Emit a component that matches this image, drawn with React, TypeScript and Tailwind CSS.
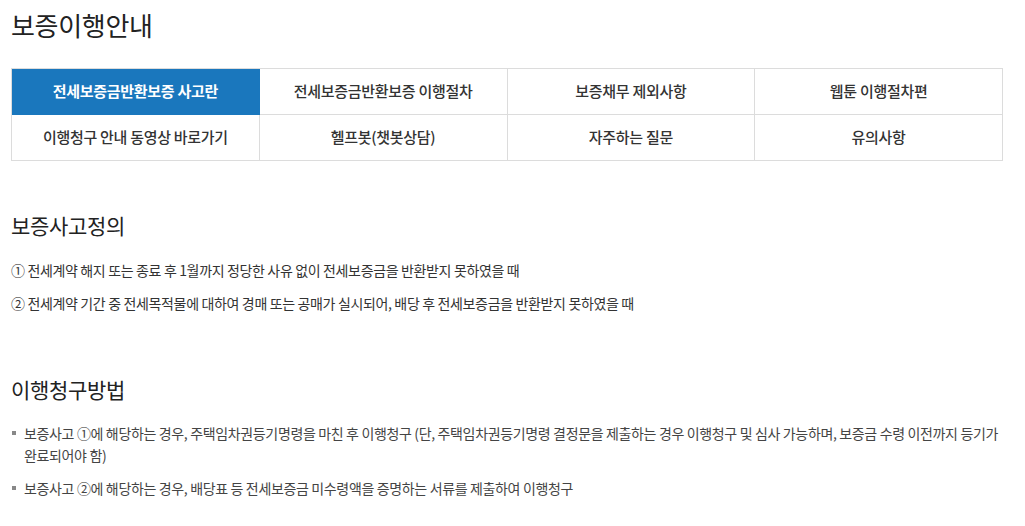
import React from "react";

const font = { fontFamily: '"Noto Sans CJK KR", "Noto Sans", sans-serif' };

const row1 = ["전세보증금반환보증 사고란", "전세보증금반환보증 이행절차", "보증채무 제외사항", "웹툰 이행절차편"];
const row2 = ["이행청구 안내 동영상 바로가기", "헬프봇(챗봇상담)", "자주하는 질문", "유의사항"];

export default function App() {
  return (
    <div className="w-[1025px] h-[526px] bg-white overflow-hidden text-[#333]" style={font}>
      <div className="pl-[11px] pr-[22px]">
        <h1 className="pt-[7px] h-[68px] text-[26px] leading-[36px] text-[#222] tracking-[-0.3px]">보증이행안내</h1>
        <div className="grid grid-cols-4 border-t border-l border-[#dcdcdc] w-[992px]">
          {[...row1, ...row2].map((t, i) => (
            <div
              key={i}
              className={
                i === 0
                  ? "h-[46px] flex items-center justify-center bg-[#1a77bd] text-white text-[15px] font-bold tracking-[-0.3px] border-r border-b border-[#1a77bd]"
                  : "h-[46px] flex items-center justify-center text-[15px] text-[#333] font-medium tracking-[-0.3px] border-r border-b border-[#dcdcdc]"
              }
            >
              {t}
            </div>
          ))}
        </div>
        <h2 className="mt-[48px] text-[21px] leading-[32px] text-[#222] tracking-[-0.3px]">보증사고정의</h2>
        <p className="mt-[19px] text-[14px] leading-[20px] tracking-[-0.35px]">① 전세계약 해지 또는 종료 후 1월까지 정당한 사유 없이 전세보증금을 반환받지 못하였을 때</p>
        <p className="mt-[13px] text-[14px] leading-[20px] tracking-[-0.35px]">② 전세계약 기간 중 전세목적물에 대하여 경매 또는 공매가 실시되어, 배당 후 전세보증금을 반환받지 못하였을 때</p>
        <h2 className="mt-[60px] text-[21px] leading-[32px] text-[#222] tracking-[-0.3px]">이행청구방법</h2>
        <ul className="mt-[17px] text-[14px] leading-[22px] tracking-[-0.35px] text-[#444]">
          <li className="relative pl-[13px]">
            <span className="absolute left-[1px] top-[9px] w-[4px] h-[4px] bg-[#888]" />
            보증사고 ①에 해당하는 경우, 주택임차권등기명령을 마친 후 이행청구 (단, 주택임차권등기명령 결정문을 제출하는 경우 이행청구 및 심사 가능하며, 보증금 수령 이전까지 등기가 완료되어야 함)
          </li>
          <li className="relative pl-[13px] mt-[11px]">
            <span className="absolute left-[1px] top-[9px] w-[4px] h-[4px] bg-[#888]" />
            보증사고 ②에 해당하는 경우, 배당표 등 전세보증금 미수령액을 증명하는 서류를 제출하여 이행청구
          </li>
        </ul>
      </div>
    </div>
  );
}
